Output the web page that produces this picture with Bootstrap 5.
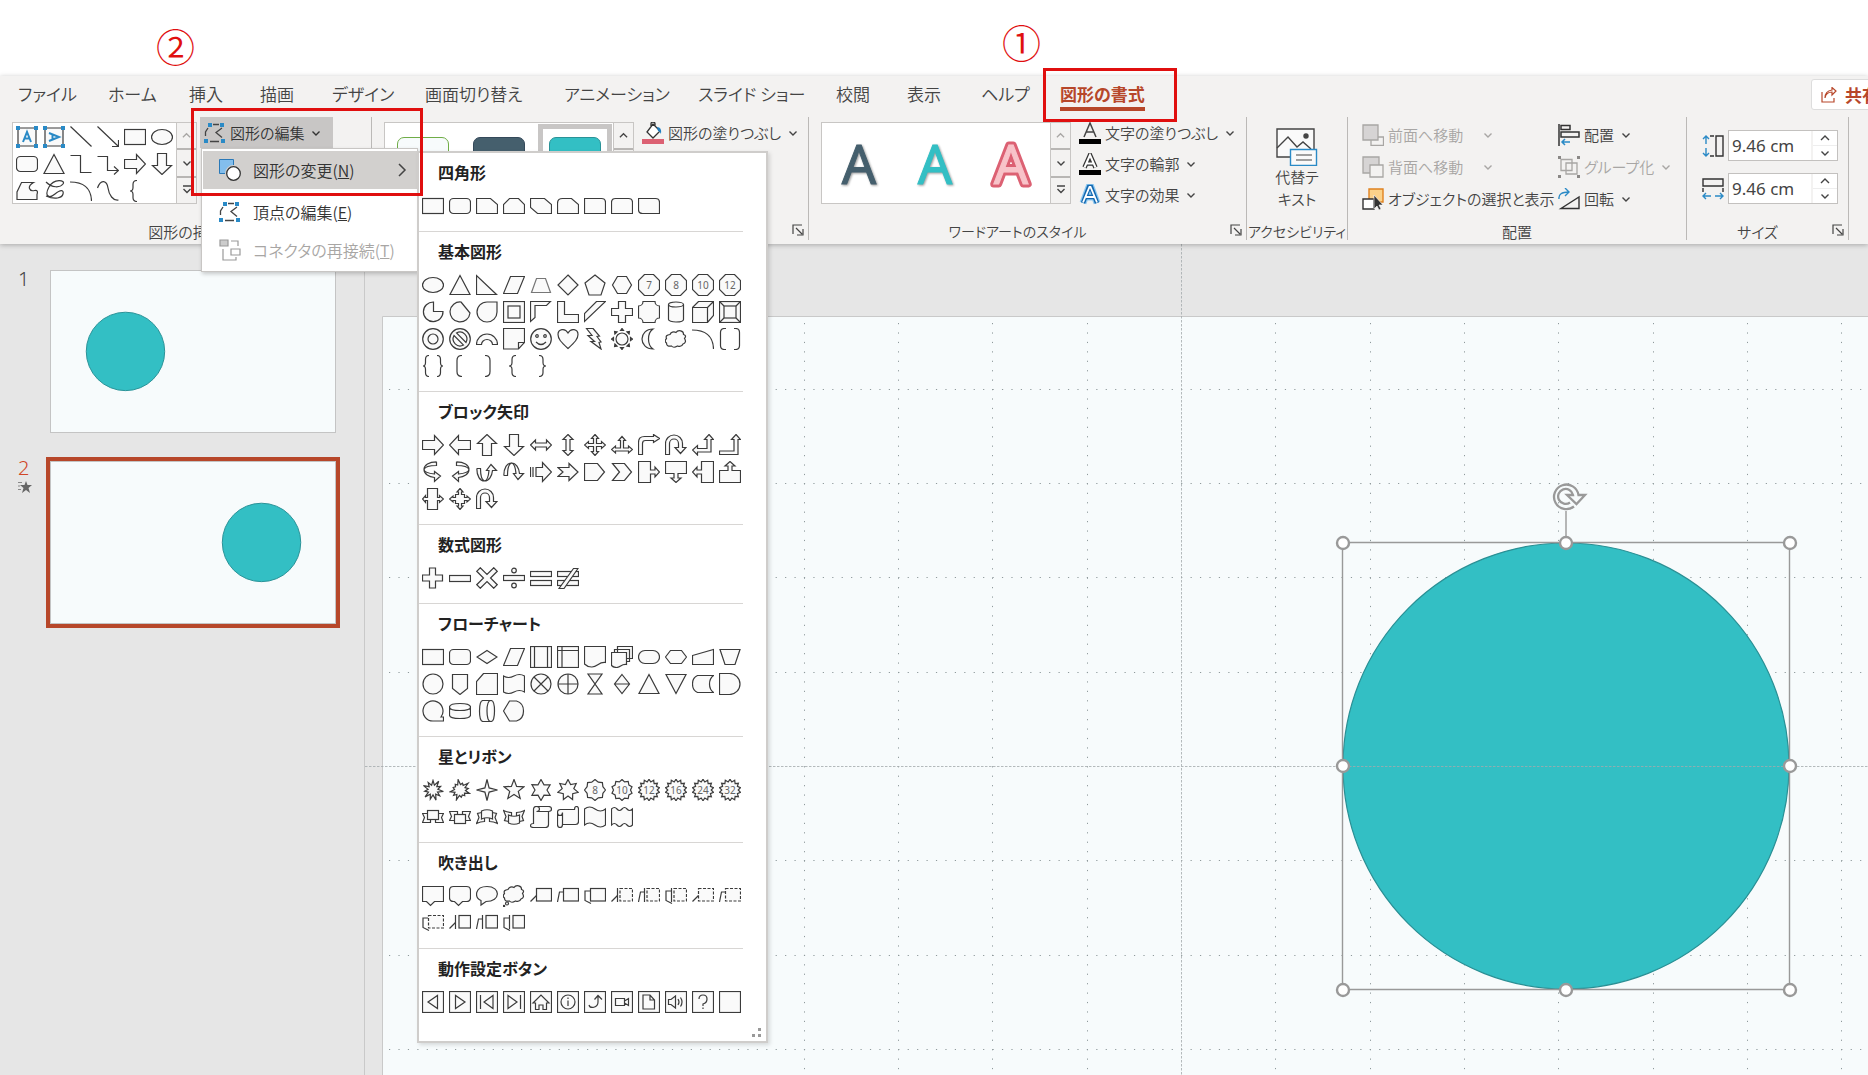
<!DOCTYPE html>
<html lang="ja">
<head>
<meta charset="utf-8">
<meta name="viewport" content="width=device-width, initial-scale=1">
<title>図形の書式</title>
<link href="https://cdn.jsdelivr.net/npm/bootstrap@5.3.0/dist/css/bootstrap.min.css" rel="stylesheet">
<style>
:root{--ink:#444;--line:#c8c6c4;--accent:#b7472a;--teal:#33bfc4;--paper:#f7fbfc}
body{font-family:"Noto Sans CJK JP",sans-serif;font-feature-settings:"palt";font-size:15px;font-weight:350;line-height:24px;color:var(--ink);background:#fff}
button{font:inherit;font-feature-settings:inherit;color:inherit;background:none;border:0;padding:0;text-align:left;white-space:nowrap}
svg{display:block;flex:none}
.app-shell{height:100vh}
.top-space{height:76px}
.ribbon{background:#f3f2f1;height:168px;box-shadow:0 1px 5px #0004;z-index:5}
.tab-bar{height:41px;padding:3px 0 0 18px;overflow:hidden}
.tab-list{display:grid;align-items:start;grid-template-columns:90px 81px 71px 72px 93px 139px 134px 138px 71px 74px 79px auto;font-size:17px}
.tab-list a{color:var(--ink);text-decoration:none;line-height:25px;white-space:nowrap;justify-self:start;padding:2px 0 1px}
.tab-list a.on{color:var(--accent);font-weight:700;border-bottom:4px solid var(--accent)}
.share-btn{height:31px;width:77px;margin-right:-20px;background:#fff;border:1px solid #ddd;border-radius:3px;color:var(--accent);font-weight:700;font-size:17px;padding-left:9px}
.rgroup{height:123px;border-right:1px solid #bbb9b7;display:flex;flex-direction:column;flex:none}
.rgroup>div:first-child{height:108px}
.rlabel{line-height:15px;display:flex;padding-bottom:1px;white-space:nowrap}
.rlabel span{flex:1;text-align:center}
.g3 .rlabel,.g4 .rlabel{font-size:14px}
.g1{width:372px}.g2{width:437px}.g3{width:438px}.g4{width:101px}.g5{width:339px}.g6{width:162px}
.gallery{border:1px solid var(--line);background:#fff;height:82px;margin-top:5px;display:flex}
.scroller{width:20px;display:flex;flex-direction:column;border-left:1px solid var(--line);background:#f3f2f1}
.scroller button{flex:1;display:flex;align-items:center;justify-content:center;border-bottom:2px solid #b8b6b4}
.scroller button:last-child{border:0}
.mini{display:grid;grid-template-columns:repeat(6,27px);grid-auto-rows:27px;width:163px}
.cell-btn{display:flex;align-items:center;justify-content:center}
.cell-btn svg,.ic{width:22px;height:22px}
.shp{fill:#fafafa;stroke:#3b3b3b;stroke-width:1.2}
.shp text,.wa text{stroke:none;fill:#666;font:10px "Noto Sans",sans-serif;text-anchor:middle}
.cmd{display:flex;align-items:center;gap:4px}
.cmd .chev{margin-left:3px}
.off{color:#a8a6a4}
.edit-btn{background:#c8c6c5;width:133px;height:31px;padding-left:4px;color:#333}
.edit-menu{display:block;min-width:0;width:217px;top:31px;left:1px;padding:2px 0 2px 1px;border:1px solid var(--line);border-radius:0;box-shadow:1px 2px 4px #0003;background:#fff;font-size:16px;margin:0}
.edit-menu .dropdown-item{height:38px;display:flex;align-items:center;gap:12px;padding:0 10px 0 16px;color:#333;font-weight:350}
.edit-menu .dropdown-item.cur{background:#d2d0ce}
.edit-menu .dropdown-item:disabled{color:#a8a6a4}
.shape-menu{position:absolute;left:215px;top:2px;width:351px;background:#fff;border:2px solid #cfcdcb;padding:0 0 26px;box-shadow:2px 2px 4px #0002}
.shape-menu section{width:324px;padding-bottom:12px;border-bottom:1px solid #d8d6d4}
.shape-menu section:last-of-type{border:0;padding-bottom:0}
.shape-menu h6{font-size:16px;font-weight:700;line-height:38px;margin:0;padding:0 0 1px 19px;color:#222}
.shape-grid{display:grid;grid-template-columns:repeat(12,27px);grid-auto-rows:27px}
.grip{position:absolute;right:4px;bottom:3px}
.style-tile{width:76px;padding:14px 12px 0}
.style-tile i{display:block;height:34px;border-radius:7px;border:1px solid}
.style-tile.sel{outline:5px solid #c8c6c5;outline-offset:-6px}
.wa{width:76px;height:80px}
.wa text{font-size:54px}
.size-box{width:110px;height:31px;border:1px solid #c3c1bf;background:#fff}
.size-box input{width:82px;border:0;background:#fff;font:17px "Noto Sans",sans-serif;color:var(--ink);padding:0 3px}
.size-box .spin{width:26px;border-left:2px solid #f3f2f1}
.spin button{flex:1;display:flex;align-items:center;justify-content:center}
.spin button+button{border-top:1px solid #eee}
.work{background:#e6e6e6}
.thumbs{width:365px;border-right:1px solid #c9c9c9;padding:26px 0 0 18px;font-size:20px}
.thumbs .num{width:28px;font-family:"Noto Sans",sans-serif;line-height:18px}
.thumb{width:294px;border:4px solid transparent;padding:0}
.thumb svg{width:100%;height:auto;background:var(--paper);border:1px solid #c4c4c4}
.thumb.cur{border-color:var(--accent)}
.stage{overflow:hidden}
.note-box{position:absolute;border:3px solid #e00f0f;z-index:1100;pointer-events:none}
.note-num{position:absolute;color:#e00f0f;font-size:39px;line-height:40px;font-weight:350;font-feature-settings:normal;z-index:1100}
.note-a{left:1043px;top:68px;width:134px;height:54px}
.note-b{left:191px;top:108px;width:232px;height:88px}
.num-a{left:1002px;top:21px}.num-b{left:156px;top:25px}
</style>
<script src="https://cdn.jsdelivr.net/npm/bootstrap@5.3.0/dist/js/bootstrap.bundle.min.js"></script>
</head>
<body>
<svg width="0" height="0" class="position-absolute" aria-hidden="true">
<symbol id="dn" viewBox="0 0 10 10"><path d="M1.500 3.500l3.500 3.500 3.500-3.500" fill="none" stroke="currentColor" stroke-width="1.400"/></symbol>
<symbol id="up" viewBox="0 0 10 10"><path d="M1 7l4-4 4 4" fill="none" stroke="currentColor" stroke-width="1.400"/></symbol>
<symbol id="more" viewBox="0 0 10 10"><path d="M1 1h8M1.500 4l3.500 3.500L8.500 4" fill="none" stroke="currentColor" stroke-width="1.400"/></symbol>
<symbol id="launch" viewBox="0 0 12 12"><path d="M1 10V1h9M4 4l6 6M11 5v6H5" fill="none" stroke="#444" stroke-width="1.200"/></symbol>
<symbol id="edit" viewBox="0 0 22 22"><path d="M4 6L1.500 10v4M9 2.500h6M6 19.500h9M18 6l-6 4.500 6 5" fill="none" stroke="#444" stroke-width="1.300"/><path d="M4 1h4v4H4zM16 1h4v4h-4zM0 17h4v4H0zM17 17h4v4h-4z" fill="#2a8ac6"/></symbol>
</svg>
<div class="app-shell d-flex flex-column position-relative overflow-hidden">
  <div class="top-space flex-shrink-0"></div>
  <header class="ribbon flex-shrink-0 position-relative">
    <div class="tab-bar d-flex">
      <nav class="tab-list pt-0">
        <a href="#">ファイル</a><a href="#">ホーム</a><a href="#">挿入</a><a href="#">描画</a><a href="#">デザイン</a><a href="#">画面切り替え</a><a href="#">アニメーション</a><a href="#">スライド ショー</a><a href="#">校閲</a><a href="#">表示</a><a href="#">ヘルプ</a><a href="#" class="on">図形の書式</a>
      </nav>
      <button class="share-btn ms-auto d-flex align-items-center gap-2 flex-shrink-0"><svg width="16" height="16" viewBox="0 0 16 16" fill="none" stroke="#b7472a" stroke-width="1.200"><path d="M1 5v10h12v-4M4 11q1-6 7-6V8l4-4-4-3.500V3Q4 4 4 11z"/></svg>共有</button>
    </div>
    <div class="d-flex">
      <div class="rgroup g1">
        <div class="d-flex" style="padding-left:12px">
          <div class="gallery"><div class="mini" id="mini"></div>
            <div class="scroller"><button class="off" aria-label="上へ"><svg width="9" height="9"><use href="#up"/></svg></button><button aria-label="下へ"><svg width="10" height="10"><use href="#dn"/></svg></button><button aria-label="その他"><svg width="10" height="10"><use href="#more"/></svg></button></div>
          </div>
          <div class="dropdown" style="margin-left:3px">
            <button class="edit-btn cmd"><svg class="ic"><use href="#edit"/></svg>図形の編集<svg class="chev" width="10" height="10"><use href="#dn"/></svg></button>
            <div class="dropdown-menu edit-menu show">
              <button class="dropdown-item cur mb-1"><svg class="ic" viewBox="0 0 22 22"><path d="M.5.500h14v14H.500z" fill="#83beec" stroke="#2a79b8"/><circle cx="14.500" cy="14.500" r="7.500" fill="#fff" stroke="#d2d0ce" stroke-width="2"/><circle cx="14.500" cy="14.500" r="6.800" fill="#fff" stroke="#333" stroke-width="1.300"/></svg><span>図形の変更(<u>N</u>)</span><svg class="ms-auto" width="10" height="14" viewBox="0 0 10 14"><path d="M2 1l6 6-6 6" fill="none" stroke="#444" stroke-width="1.500"/></svg></button>
              <button class="dropdown-item"><svg class="ic"><use href="#edit"/></svg><span>頂点の編集(<u>E</u>)</span></button>
              <button class="dropdown-item" disabled><svg class="ic" viewBox="0 0 22 22" fill="none" stroke="#999" stroke-width="1.200"><path d="M1 1h8v6H1z" fill="#ccc"/><path d="M12 10h9v6h-9zM12 2h7v5M4 10v11h13v-3"/></svg><span>コネクタの再接続(<u>T</u>)</span></button>
              <div class="shape-menu" id="shapeMenu"><svg class="grip" width="10" height="10" fill="#999"><path d="M6 0h3v3H6zM0 6h3v3H0zM6 6h3v3H6z"/></svg></div>
            </div>
          </div>
        </div>
        <div class="rlabel"><span>図形の挿入</span></div>
      </div>
      <div class="rgroup g2">
        <div class="d-flex" style="padding-left:12px">
          <div class="gallery"><div class="style-tile"><i style="border-color:#70ad47;background:#f7fbfc"></i></div><div class="style-tile"><i style="border-color:#34495a;background:#455f6d"></i></div><div class="style-tile sel"><i style="border-color:#2a9297;background:#33bfc4"></i></div>
            <div class="scroller"><button aria-label="上へ"><svg width="9" height="9"><use href="#up"/></svg></button><button aria-label="下へ"><svg width="10" height="10"><use href="#dn"/></svg></button><button aria-label="その他"><svg width="10" height="10"><use href="#more"/></svg></button></div>
          </div>
          <button class="cmd align-self-start ms-2 pt-1"><svg class="ic" viewBox="0 0 22 22"><path d="M9 5V2q0-2 2-2t2 2v3M11 2l7 7-7 7-6-6z" fill="#fff" stroke="#333" stroke-width="1.300"/><path d="M15 5q5 0 4 7-1-3-3-3z" fill="#1e7fc2"/><path d="M0 17h22v5H0z" fill="#dc6173"/></svg>図形の塗りつぶし<svg class="chev" width="10" height="10"><use href="#dn"/></svg></button>
        </div>
        <div class="rlabel"><span>図形のスタイル</span><svg class="mx-1" width="12" height="12"><use href="#launch"/></svg></div>
      </div>
      <div class="rgroup g3">
        <div class="d-flex" style="padding-left:12px">
          <div class="gallery"><svg class="wa" viewBox="0 0 76 80"><text x="37" y="61" style="fill:#455f6d;stroke:#455f6d;filter:drop-shadow(1px 1px 1px #0006)">A</text></svg><svg class="wa" viewBox="0 0 76 80"><text x="37" y="61" style="fill:#33bfc4;stroke:#33bfc4;filter:drop-shadow(1px 1px 1px #0006)">A</text></svg><svg class="wa" viewBox="0 0 76 80"><text x="37" y="61" style="fill:#dc6173;stroke:#dc6173;stroke-width:7;stroke-linejoin:round">A</text><text x="37" y="61" style="fill:#f8c3c9;stroke:#f8c3c9;stroke-width:1">A</text></svg>
            <div class="scroller"><button class="off" aria-label="上へ"><svg width="9" height="9"><use href="#up"/></svg></button><button aria-label="下へ"><svg width="10" height="10"><use href="#dn"/></svg></button><button aria-label="その他"><svg width="10" height="10"><use href="#more"/></svg></button></div>
          </div>
          <div class="d-flex flex-column ms-1 ps-1 pt-1" style="gap:7px">
            <button class="cmd"><svg class="ic" viewBox="0 0 22 22"><path d="M5 15L11 1l6 14M7 10h8" fill="none" stroke="#444" stroke-width="1.500"/><path d="M0 17h22v5H0z"/></svg>文字の塗りつぶし<svg class="chev" width="10" height="10"><use href="#dn"/></svg></button>
            <button class="cmd"><svg class="ic" viewBox="0 0 22 22"><path d="M5.500 14.500L11 2l5.500 12.500M7.500 10.500h7" fill="none" stroke="#333" stroke-width="4.500"/><path d="M5.500 14.500L11 2l5.500 12.500M7.500 10.500h7" fill="none" stroke="#fff" stroke-width="2"/><path d="M0 17h22v5H0z"/></svg>文字の輪郭<svg class="chev" width="10" height="10"><use href="#dn"/></svg></button>
            <button class="cmd"><svg class="ic" viewBox="0 0 22 22" fill="none"><path d="M4 19L10 3h2l6 16M7 13h8" stroke="#8cc8f0" stroke-width="7"/><path d="M4 19L10 3h2l6 16M7 13h8" stroke="#1368b0" stroke-width="4.500"/><path d="M4 18.500L10.500 3h1l6.500 15.500M7 13h8" stroke="#fff" stroke-width="1.800"/></svg>文字の効果<svg class="chev" width="10" height="10"><use href="#dn"/></svg></button>
          </div>
        </div>
        <div class="rlabel"><span>ワードアートのスタイル</span><svg class="mx-1" width="12" height="12"><use href="#launch"/></svg></div>
      </div>
      <div class="rgroup g4">
        <div><button class="d-flex flex-column align-items-center text-center mx-auto" style="padding-top:11px;line-height:22px"><svg width="42" height="38" viewBox="0 0 42 38" fill="#fafafa" stroke="#444" stroke-width="1.400"><path d="M1 1h37v28H1z"/><path d="M1 20L12 9l9 10 6-5 8 7" fill="none"/><circle cx="30" cy="8" r="2" fill="#444"/><path d="M14.500 21.500h26v16h-26z" stroke="#2a8ac6"/><path d="M20 27h16M20 32h16" stroke-width="1"/></svg>代替テ<br>キスト</button></div>
        <div class="rlabel"><span>アクセシビリティ</span></div>
      </div>
      <div class="rgroup g5">
        <div class="d-flex" style="padding-left:14px">
          <div class="d-flex flex-column" style="width:196px;gap:8px;padding-top:6px">
            <button class="cmd off"><svg class="ic" viewBox="0 0 22 22" stroke="#a8a6a4" stroke-width="1.300"><path d="M9 13h12.500v8.500H9z" fill="#f3f2f1"/><path d="M1 1h15v15H1z" fill="#d6d4d4"/></svg>前面へ移動<svg class="ms-3" width="10" height="10"><use href="#dn"/></svg></button>
            <button class="cmd off"><svg class="ic" viewBox="0 0 22 22" stroke="#a8a6a4" stroke-width="1.300"><path d="M1 1h16v16H1z" fill="#d6d4d4"/><path d="M8 9h13v12H8z" fill="#f3f2f1"/></svg>背面へ移動<svg class="ms-3" width="10" height="10"><use href="#dn"/></svg></button>
            <button class="cmd"><svg class="ic" viewBox="0 0 22 22"><path d="M7 1h14v13H7z" fill="#fbd28a" stroke="#e08321" stroke-width="1.400"/><path d="M1 11h11v10H1z" fill="#fff" stroke="#333" stroke-width="1.400"/><path d="M12 7v14l3-3 2 4 2-1-2-4h4z" fill="#333" stroke="#fff" stroke-width=".6"/></svg>オブジェクトの選択と表示</button>
          </div>
          <div class="d-flex flex-column" style="gap:8px;padding-top:6px">
            <button class="cmd"><svg class="ic" viewBox="0 0 22 22" fill="none" stroke="#333" stroke-width="1.500"><path d="M1 0v22M3 1.500h9v4H3zM3 8h18v5H3z"/><path d="M12 18H4M7 15l-3 3 3 3" stroke="#2a8ac6"/></svg>配置<svg class="chev" width="10" height="10"><use href="#dn"/></svg></button>
            <button class="cmd off"><svg class="ic" viewBox="0 0 22 22" fill="none" stroke="#a8a6a4" stroke-width="1.300"><path d="M3 3.500h11v11H3zM8 7h11v11H8z"/><path d="M0 0h3v3H0zM19 0h3v3h-3zM0 19h3v3H0zM19 19h3v3h-3z" fill="#8a8886" stroke="none"/></svg>グループ化<svg class="chev" width="10" height="10"><use href="#dn"/></svg></button>
            <button class="cmd"><svg class="ic" viewBox="0 0 22 22" fill="none" stroke="#333" stroke-width="1.400"><path d="M3 20.500h18V9z"/><path d="M1 11Q0 4 11 4M7 0l4 4-4 4" stroke="#2a8ac6"/></svg>回転<svg class="chev" width="10" height="10"><use href="#dn"/></svg></button>
          </div>
        </div>
        <div class="rlabel"><span>配置</span></div>
      </div>
      <div class="rgroup g6">
        <div style="padding:13px 0 0 15px">
          <div class="d-flex align-items-center gap-1 mb-2 pb-1"><label for="hgt" class="m-0"><svg class="ic" role="img" aria-label="高さ" viewBox="0 0 22 22" fill="none" stroke="#333" stroke-width="1.400"><path d="M14 1h7v20h-7zM8 1h4M8 21h4"/><path d="M4 1v8M1 4l3-3 3 3M4 21v-8M1 18l3 3 3-3" stroke="#2a8ac6"/></svg></label>
            <div class="size-box d-flex"><input id="hgt" type="text" value="9.46 cm"><div class="spin d-flex flex-column"><button aria-label="増やす"><svg width="10" height="10"><use href="#up"/></svg></button><button aria-label="減らす"><svg width="10" height="10"><use href="#dn"/></svg></button></div></div></div>
          <div class="d-flex align-items-center gap-1"><label for="wid" class="m-0"><svg class="ic" role="img" aria-label="幅" viewBox="0 0 22 22" fill="none" stroke="#333" stroke-width="1.400"><path d="M1 1h20v7H1zM1 10v4M21 10v4"/><path d="M1 18h8M4 15l-3 3 3 3M21 18h-8M18 15l3 3-3 3" stroke="#2a8ac6"/></svg></label>
            <div class="size-box d-flex"><input id="wid" type="text" value="9.46 cm"><div class="spin d-flex flex-column"><button aria-label="増やす"><svg width="10" height="10"><use href="#up"/></svg></button><button aria-label="減らす"><svg width="10" height="10"><use href="#dn"/></svg></button></div></div></div>
        </div>
        <div class="rlabel"><span>サイズ</span><svg class="mx-1" width="12" height="12"><use href="#launch"/></svg></div>
      </div>
    </div>
  </header>
  <main class="work d-flex flex-grow-1 overflow-hidden">
    <aside class="thumbs d-flex flex-column flex-shrink-0" style="gap:20px">
      <div class="d-flex"><div class="num">1</div><button class="thumb" style="margin-top:-4px" aria-label="スライド 1"><svg viewBox="0 0 286 162"><circle cx="75" cy="81" r="39.500" fill="#33bfc4" stroke="#2a9297"/></svg></button></div>
      <div class="d-flex"><div class="num" style="color:#d04525;padding-top:2px">2<svg class="mt-1" width="14" height="12" viewBox="0 0 14 12"><path d="M8 0l1.500 4H14l-3.500 3L12 12 8 9l-4 3 1.500-5L2 4h4.500z" fill="#666"/><path d="M0 1.500h4M0 5h2M0 8.500h3" stroke="#888"/></svg></div><button class="thumb cur" aria-label="スライド 2"><svg viewBox="0 0 286 162"><circle cx="212" cy="81" r="39.500" fill="#33bfc4" stroke="#2a9297"/></svg></button></div>
    </aside>
    <div class="stage flex-grow-1">
      <svg width="100%" height="100%">
        <path d="M17.500 3000V72.500H4000V3000z" fill="#f7fbfc" stroke="#c9c9c9"/>
        <g id="grid" stroke="#8f9a9c" stroke-width="1" fill="none"></g>
        <circle cx="1201" cy="522" r="223" fill="#33bfc4" stroke="#2a8f94" stroke-width="1.200"/>
        <g opacity=".8"><path d="M0 522.500H4000M816.500 0V3000" stroke="#a4abad" stroke-dasharray="2.500 1.500"/></g>
        <g fill="none" stroke="#999" stroke-width="1.400"><path d="M977.500 298.500h447v447h-447zM1201 298v-31"/></g>
        <g id="handles" fill="#fff" stroke="#999" stroke-width="2.400"></g>
        <g fill="none" stroke="#999" stroke-width="2.300"><path d="M1209 262.500a12.300 12.300 0 1 1 4.500-11.500h6.500l-8.500 9-9.500-9h6a7.500 7.500 0 1 0-3 7.500"/></g>
      </svg>
    </div>
  </main>
  <div class="note-num num-a">①</div><div class="note-num num-b">②</div>
  <div class="note-box note-a"></div><div class="note-box note-b"></div>
</div>
<script>
// Shape glyphs are drawn on a 22 x 22 box.
const P = (d, a = '') => `<path d="${d}" ${a}/>`;
const turn = (s, a) => `<g transform="rotate(${a} 11 11)">${s}</g>`;
const flip = s => `<g transform="translate(22 0) scale(-1 1)">${s}</g>`;
const open = d => P(d, 'fill="none"');
const txt = (t, y = 15) => `<text x="11" y="${y}">${t}</text>`;
const circ = (r, x = 11, y = 11, a = '') => `<circle cx="${x}" cy="${y}" r="${r}" ${a}/>`;
const rect = (x, y, w, h, r = 0, a = '') => `<rect x="${x}" y="${y}" width="${w}" height="${h}" rx="${r}" ${a}/>`;
function star(n, R, r, jag = []) {
  let d = '';
  for (let i = 0; i < n * 2; i++) {
    const q = i % 2 ? r : R * (jag[(i / 2) % jag.length] || 1), t = Math.PI * (i / n - 0.5);
    d += (i ? 'L' : 'M') + (11 + q * Math.cos(t)).toFixed(1) + ' ' + (11 + q * Math.sin(t)).toFixed(1);
  }
  return P(d + 'z');
}
const box = rect(.5, 3.5, 21, 15), rbox = rect(.5, 3.5, 21, 15, 4);
const tri = P('M11 1.500l10 19H1z'), para = P('M7.500 2.500h14l-7 17H.500z');
const oct = t => P('M6.500.500h9l6 6v9l-6 6h-9l-6-6v-9z') + txt(t);
const arrow = P('M.5 6.500h12v-5l9 9.500-9 9.500v-5H.500z');
const lr = P('M.5 11l5-5v3h11v-3l5 5-5 5v-3h-11v3z');
const uturn = P('M.5 20.500v-11a8.500 8.500 0 0 1 17 0v4h3.500l-5.500 6-5.500-6h3.500v-4a4.500 4.500 0 0 0-9 0v11z');
const curved = P('M14.500.800C7 .8 2 4 2 8.500S7 16 12.500 16.500v4l6-5.500-6-4.500V13C7 12.500 2.500 11.500 2 8.500M2 8.500C3 5.500 8 4.500 14.500 4.500V.800');
const callR = P('M.5.500h12v8.500h4.500v-3l4.500 5-4.500 5v-3h-4.500v8.500H.500z');
const plus = P('M7.500 1h6v7h7v6h-7v7h-6v-7H.500V8h7z');
const bracket = open('M13 .5q-5 0-5 5v11q0 5 5 5'), brace = open('M13 .5q-4 0-4 4v3q0 3.500-3 3.500 3 0 3 3.500v3q0 4 4 4');
const cloud = 'M5 4.500a4 3.500 0 0 1 6-2 4 3.500 0 0 1 7.500 2q3.500 1 1 4 2.500 4-1.500 5.500-1.500 3.500-5.500 2-4 2.500-6 0-5 1-5-3-2.500-2 0-4.500-1.500-3.500 3.500-4z';
const bangs = star(11, 10.5, 5, [.9, 1, .8, 1, .85, 1]), dash = 'stroke-dasharray="3 1.500"';
const lead = ['M.5 16.500l6-6', 'M.5 17l2-10H6.500', 'M6 6H1v9.500l6 3'];
const line = (k, x, bar, d) => rect(x, 3.5, 21.5 - x, 12.5, 0, (d ? dash : '')) + open(lead[k]) + (bar ? open('M6.500 3v14') : '');
const frame = rect(.5, .5, 21, 21);
const act = d => frame + P(d);
const back = 'M15.500 4.500v13L6 11z';
const burst = t => star(14, 10.8, 8.2) + txt(t);
const cross = 'M11 .5l3.500 4h-2v5h5v-2l4 3.500-4 3.500v-2h-5v5h2l-3.500 4-3.500-4h2v-5h-5v2L.5 11l4-3.500v2h5v-5h-2z';
const sections = [
 ['四角形', [box, rbox, P('M.5 3.500h14l7 6v9H.500z'), P('M6.500 3.500h9l6 6v9H.500v-9z'), P('M.5 3.500h14l7 6v9h-14l-7-6z'), P('M5.500 3.500h9l7 6v9H.500v-10q0-5 5-5z'), P('M.5 3.500h17q4 0 4 4v11H.500z'), P('M4.500 3.500h13q4 0 4 4v11H.500v-11q0-4 4-4z'), P('M.5 3.500h17q4 0 4 4v11h-17q-4 0-4-4z')]],
 ['基本図形', ['<ellipse cx="11" cy="11" rx="10.500" ry="7.500"/>', tri, P('M.5 1.500v19h20z'), para, P('M6.500 4.500h9l5 14h-19z', 'stroke="#777"'), P('M11 1l10 10-10 10L1 11z'), P('M11 1l10 8-4 12H5L1 9z'), P('M6.500 2.500h9l5 8.500-5 8.500h-9L1.500 11z'), oct(7), oct(8), oct(10), oct(12),
  P('M11.500 1v9.500h9.500A9.800 9.800 0 1 1 11.500 1z'), P('M12 1l9 11A10 10 0 1 1 12 1z'), P('M11 1h10v10A10 10 0 1 1 11 1z'), frame + rect(5, 5, 12, 12), P('M.5.500h20l-4 4H5v12l-4.500 4z'), P('M.5.500h7v13h14v8H.500z'), P('M12.500.500h9l-21 20v-8z'), P('M7.500.500h7v7h7v7h-7v7h-7v-7h-7v-7h7z'), P('M5 .5h12a4.500 4.500 0 0 0 4.500 4.500v12a4.500 4.500 0 0 0-4.500 4.500H5A4.500 4.500 0 0 0 .5 17V5A4.500 4.500 0 0 0 5 .5z'), P('M3.500 3.500a7.500 2.500 0 0 1 15 0v15a7.500 2.500 0 0 1-15 0zM3.500 3.500a7.500 2.500 0 0 0 15 0'), P('M.5 6.500l6-6h15v14l-6 7H.500zM.5 6.500h15v15M15.500 6.500l6-6'), frame + rect(5, 5, 12, 12) + P('M.5.500L5 5M21.500.500L17 5M.5 21.500L5 17M21.500 21.500L17 17'),
  circ(10.3) + circ(5), circ(10.3) + P('M7.500 5a7 7 0 0 1 9.500 9.500zM5 7.500a7 7 0 0 0 9.500 9.500z'), P('M.5 16.500a10.500 10.500 0 0 1 21 0h-5a5.500 5 0 0 0-11 0z'), P('M.5.500h21v14l-6 6.500H.500zM15.500 21v-6.500h6'), circ(10.3) + circ(1.3, 7, 8) + circ(1.3, 15, 8) + open('M6 14q5 5 10 0'), P('M11 20.500C4 14 1 11 1 6.500 1 1 8-.5 11 5 14-.5 21 1 21 6.500 21 11 18 14 11 20.500z'), P('M9 .5L15.500 8l-2.500.500L17 14l-2 .5 2 6.500L7 13.500h3.500L4 7.500h4L2.500.500z'), circ(6) + Array.from({length: 8}, (_, i) => turn(P('M9.500 2.500L11 .5l1.500 2z', 'fill="#333"'), i * 45)).join(''), P('M15 1C8 1 4 6 4 11s4 10 11 10C9 17 9 5 15 1z'), P(cloud, 'transform="translate(0 2)"'), open('M0 2q21 0 21.500 19'), open('M7 .5H5.500q-4 0-4 4v13q0 4 4 4H7M15 .5h1.500q4 0 4 4v13q0 4-4 4H15'),
  open('M7 .5q-3.500 0-3.500 4v3q0 3.500-2.500 3.500 2.500 0 2.500 3.500v3q0 4 3.500 4M15 .5q3.500 0 3.500 4v3q0 3.500 2.500 3.500-2.500 0-2.500 3.500v3q0 4-3.500 4'), bracket, flip(bracket), brace, flip(brace)]],
 ['ブロック矢印', [arrow, flip(arrow), turn(arrow, -90), turn(arrow, 90), lr, turn(lr, 90), P(cross), P('M11 2.500l3.500 4h-2v7.500h5v-2l4 3.500-4 3.500v-2h-13v2l-4-3.500 4-3.500v2h5V6.500h-2z'), P('M.5 20.500v-12q0-6 6-6h9V.500l6 4-6 4v-2h-8q-3 0-3 3v11z'), uturn, P('M17 .5l4.500 5H19v12.500H5.500v3l-5-5 5-4.500v3H15v-9h-2.500z'), P('M17 .5l4.500 5H19v15H.500V17H15V5.500h-2.500z'),
  curved, flip(curved), turn(curved, -90), flip(turn(curved, 90)), P('M.5 6v10M3 6v10M6 6.500h6.500v-5l9 9.500-9 9.500v-5H6z'), P('M1 6.500h11v-4l9 8.500-9 8.500v-4H1L6 11z'), P('M.5 2.500h13l7 8.500-7 8.500H.500z'), P('M1.500 2.500h12l7 8.500-7 8.500h-12L8.500 11z'), callR, turn(callR, 90), flip(callR), turn(callR, -90),
  P('M5.500.500h10v9h2v-2L21.500 11l-4 3.500v-2h-2v9h-10v-9h-2v2L.5 11l3-3.500v2h2z'), P('M11 .5l3 3.500h-1.500v2.500h3v3H18V8l3.500 3-3.500 3v-1.500h-2.500v3h-3V18H14l-3 3.500L8 18h1.500v-2.500h-3v-3H4V14L.5 11 4 8v1.500h2.500v-3h3V4H8z'), uturn]],
 ['数式図形', [plus, rect(.5, 8.5, 21, 6), turn(P('M8.500-1h5v9.500H23v5h-9.500V23h-5v-9.500H-1v-5h9.500z'), 45), rect(.5, 8.5, 21, 5) + circ(2.3, 11, 3.5) + circ(2.3, 11, 18.5), rect(.5, 4.5, 21, 5) + rect(.5, 13.5, 21, 5), rect(.5, 4.5, 21, 5) + rect(.5, 13.5, 21, 5) + P('M16.500 1.500h4.500l-14 20H2z')]],
 ['フローチャート', [box, rbox, P('M11 4.500l10 6.500-10 6.500L1 11z'), para, frame + P('M4.500.500v21M17.500.500v21'), frame + P('M5 .5v21M.5 4.500h21'), P('M.5.500h21v16c-7-1-8 5-14 4.500q-4 0-7-3z'), P('M6.500.500h15v12h-15zM3.500 3.500h15v12h-15z') + P('M.5 6.500h15v12c-5-1-6 3-10 3q-3 0-5-2z'), rect(.5, 4.5, 21, 13, 6.5), P('M5.500 4.500h11l5 6.500-5 6.500h-11L.5 11z'), P('M.5 9.500l21-6v15H.500z'), P('M1 3.500h20l-5 15H6z'),
  circ(10), P('M3.500 1.500h15v14l-7.500 6-7.500-6z'), P('M7.500.500h14v21H.500v-13z'), P('M.5 3q5 3 10.500 0t10.500 0v16q-5-3-10.500 0T.5 19z'), circ(10) + P('M4 4l14 14M18 4L4 18'), circ(10) + P('M11 1v20M1 11h20'), P('M4 1h14L4 21h14z'), P('M11 1.500l7.500 9.500-7.500 9.500L3.500 11zM3.500 11h15'), tri, turn(tri, 180), P('M5.500 2.500h16q-4 3-4 8.500t4 8.500h-16q-5-2-5-8.500t5-8.500z'), P('M.5.500h10a10.500 10.500 0 0 1 0 21H.500z'),
  P('M21.500 21H11A10 10 0 1 1 19 17h2.500z'), P('M.5 7q0-3.500 10.500-3.500T21.500 7v8q0 3.500-10.500 3.500T.5 15zM.5 7q0 3.500 10.500 3.500T21.500 7'), P('M7 .5h8q3.500 0 3.500 10.500T15 21.500H7Q3.500 21.500 3.500 11T7 .5zM15 .5q-4 0-4 10.500t4 10.500'), P('M6.500 1h7q7 2 7 10t-7 10h-7L.5 11z')]],
 ['星とリボン', [bangs, turn(star(12, 10.5, 5.5, [.7, 1, .8, .95, .7]), 20), star(4, 10.5, 3), star(5, 10.5, 4.5), star(6, 10.5, 6), star(7, 10.5, 6), star(8, 10.5, 8.5) + txt(8), star(10, 10.5, 8.5) + txt(10), burst(12), burst(16), burst(24), burst(32),
  P('M5.500 7.500h-5l2 4-2 5h8v-3M16.500 7.500h5l-2 4 2 5h-8v-3') + rect(5.5, 4.5, 11, 9), turn(P('M5.500 7.500h-5l2 4-2 5h8v-3M16.500 7.500h5l-2 4 2 5h-8v-3') + rect(5.5, 4.5, 11, 9), 180), P('M5.500 6.500l-4 1 1.500 4-2.500 6q4-2 8-2v-3M16.500 6.500l4 1-1.500 4 2.500 6q-4-2-8-2v-3M5.500 13V5q5.500-2.500 11 0v8q-5.500-2.500-11 0z'), turn(P('M5.500 6.500l-4 1 1.500 4-2.500 6q4-2 8-2v-3M16.500 6.500l4 1-1.500 4 2.500 6q-4-2-8-2v-3M5.500 13V5q5.500-2.500 11 0v8q-5.500-2.500-11 0z'), 180),
  P('M3.500 17.500v-14q0-3 3-3h12q3 0 3 2.500t-3 2.500v13q0 3-3 3h-12q-3 0-3-2t3-2zM6.500.500q3 0 3 2.500t-3 2.500h12'), turn(P('M3.500 17.500v-14q0-3 3-3h12q3 0 3 2.500t-3 2.500v13q0 3-3 3h-12q-3 0-3-2t3-2zM6.500.500q3 0 3 2.500t-3 2.500h12', 'transform="translate(22 0) scale(-1 1)"'), -90), P('M.5 3q5-4 10.500 0t10.500 0v16q-5 4-10.500 0T.5 19z'), P('M.5 3q3-3 5.500 0t5 0 5 0 5.500 0v16q-3 3-5.500 0t-5 0-5 0-5.500 0z')]],
 ['吹き出し', [P('M.5 1.500h21v15h-9l-4 4-4-4h-4z'), P('M4.500 1.500h13q4 0 4 4v7q0 4-4 4h-4l-4 4-4-4h-1q-4 0-4-4v-7q0-4 4-4z'), P('M5 20v-4.500C-2 12-1 1.500 11 1.500c14 0 14 15-1 15z'), P(cloud) + circ(1.5, 4, 18.5) + circ(.7, 1, 21), line(0, 6.5), line(1, 6.5), line(2, 6.5), line(0, 9, 1, 1), line(1, 9, 1, 1), line(2, 9, 1, 1), line(0, 6.5, 0, 1), line(1, 6.5, 0, 1),
  line(2, 6.5, 0, 1), line(0, 10, 1), line(1, 10, 1), line(2, 10, 1)]],
 ['動作設定ボタン', [act(back), frame + flip(P(back)), frame + P('M4.500 4v14M17 4.500v13L8 11z'), frame + flip(P('M4.500 4v14M17 4.500v13L8 11z')), act('M3 12l8-8 8 8h-2.500v6.500h-3.500V14H9v4.500H5.500V12z'), frame + circ(7) + P('M11 9.500V15M11 6.500v1.500'), frame + open('M5 14c1 4 9 3 9-3V5M10.500 8.500L14 4.500l4 4'), act('M4.500 7.500h9v7h-9zM13.500 10l4-2.500v7l-4-2.500'), act('M5 4h7l4.500 5v9H5zM12 4v5h4.500'), frame + P('M3.500 8.500H6L10.500 5v12L6 13.500H3.500z') + open('M13 8q2 3 0 6M15.500 6.500q3 4.500 0 9'), frame + open('M7 8q0-4 4-4t4 4-4 5v2M11 16.500V18'), frame]]
];
const cell = s => `<button class="cell-btn" tabindex="-1"><svg class="shp" viewBox="0 0 22 22">${s}</svg></button>`;
document.getElementById('shapeMenu').insertAdjacentHTML('afterbegin', sections.map(([t, a]) => `<section><h6>${t}</h6><div class="shape-grid">${a.map(cell).join('')}</div></section>`).join(''));
const tb = r => P('M2 2h18v18H2z') + `<path d="M0 0h4v4H0zM18 0h4v4h-4zM0 18h4v4H0zM18 18h4v4h-4z" fill="#2a8ac6" stroke="none"/>` + turn('<path d="M7 16l4-10 4 10M8.500 12.500h5" fill="none" stroke="#2a8ac6" stroke-width="2"/>', r);
document.getElementById('mini').innerHTML = [tb(0), tb(90), open('M.5.500l21 20'), open('M.5.500l21 20M21.500 14v6.500H15'), box, '<ellipse cx="11" cy="11" rx="10.500" ry="7.500"/>',
 rbox, tri, open('M.5 2.500h10v17h11'), open('M.5 3.500h10v14h11M17 13.500l4.500 4-4.500 4'), arrow, turn(arrow, 90),
 P('M5.500 2.500h12q-5 3-4 6t5 2 2.500 4v5H1V12z'), open('M3 2c6 6 14 6 17 2S11-2 6 7s0 12 6 7 9-4 8 0-8 6-17 2'), open('M0 2q21 0 21.500 19'), open('M.5 8C4-2 10 1 11 8s5 13 10.500 12'), brace].map(cell).join('');
// Dotted drawing grid centred on the slide's guides.
const step = 94.3, dot = step / 10; let g = '';
for (let i = -4; i < 12; i++) if (i) g += `<path d="M${Math.round(816 + i * step) + .5} 79v3000" stroke-dasharray="1.200 ${dot - 1.2}"/>`;
for (let i = -4; i < 12; i++) if (i) g += `<path d="M24 ${Math.round(522 + i * step) + .5}H4000" stroke-dasharray="1.200 ${dot - 1.2}"/>`;
document.getElementById('grid').innerHTML = g;
document.getElementById('handles').innerHTML = [[978, 299], [1201, 299], [1425, 299], [978, 522], [1425, 522], [978, 746], [1201, 746], [1425, 746]].map(([x, y]) => `<circle cx="${x}" cy="${y}" r="6"/>`).join('');
</script>
</body>
</html>
